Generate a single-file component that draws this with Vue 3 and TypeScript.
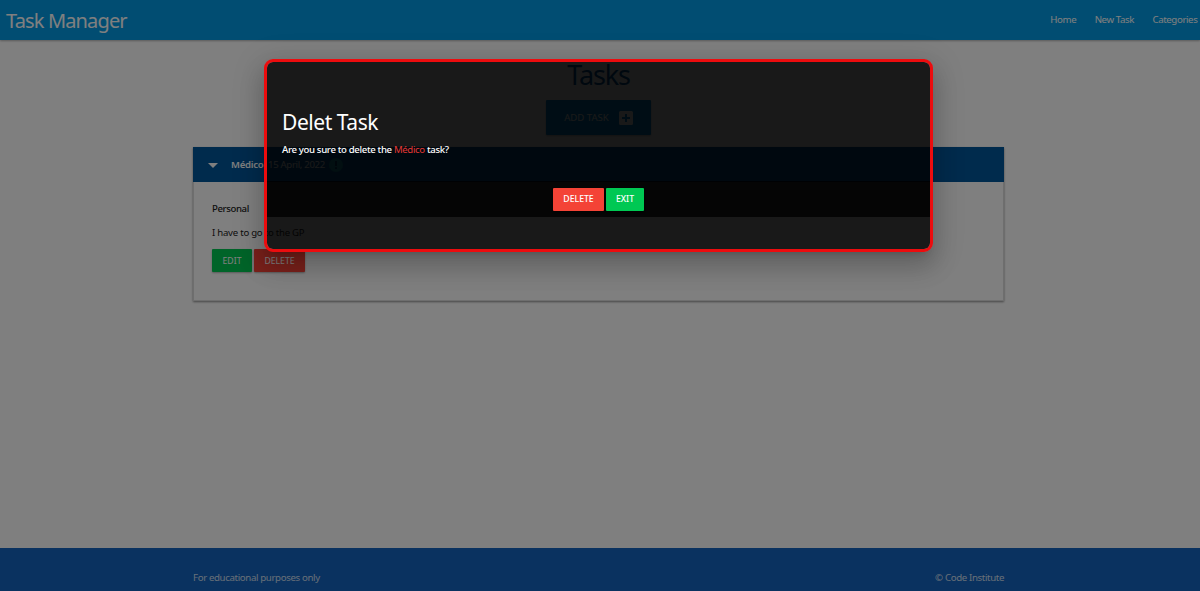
<script setup lang="ts">
interface Task {
  name: string
  date: string
  category: string
  description: string
}

const links: string[] = ['Home', 'New Task', 'Categories']
const task: Task = {
  name: 'Médico',
  date: '15 April, 2022',
  category: 'Personal',
  description: 'I have to go to the GP',
}
</script>

<template>
  <div class="page">
    <nav class="nav">
      <a class="brand">Task Manager</a>
      <div class="links">
        <a v-for="link in links" :key="link">{{ link }}</a>
      </div>
    </nav>
    <main class="container">
      <h3 class="title">Tasks</h3>
      <a class="add">
        <span>ADD TASK</span>
        <svg viewBox="0 0 14 14"><path fill-rule="evenodd" fill="currentColor" d="M1.5 0h11A1.5 1.5 0 0 1 14 1.5v11a1.5 1.5 0 0 1-1.5 1.5h-11A1.5 1.5 0 0 1 0 12.500V1.500A1.500 1.500 0 0 1 1.500 0zM6 3v3H3v2h3v3h2V8h3V6H8V3z" /></svg>
      </a>
      <section class="card">
        <header class="card-head">
          <svg class="caret" viewBox="0 0 10 5"><path d="M0 0h10L5 5z" fill="#fff" /></svg>
          <b>{{ task.name }}</b>
          <span class="date">{{ task.date }}</span>
          <svg class="alert" viewBox="0 0 14 14"><circle cx="7" cy="7" r="7" fill="#1597a8" /><path d="M6 3h2v5H6zM6 9.200h2V11H6z" fill="#01406f" /></svg>
        </header>
        <div class="card-body">
          <p class="category">{{ task.category }}</p>
          <p class="description">{{ task.description }}</p>
          <div class="actions">
            <a class="btn green edit">EDIT</a>
            <a class="btn red delete">DELETE</a>
          </div>
        </div>
      </section>
    </main>
    <footer class="footer">
      <div class="footer-inner">
        <span class="purpose">For educational purposes only</span>
        <span class="copyright">© Code Institute</span>
      </div>
    </footer>
    <div class="overlay"></div>
    <div class="modal">
      <div class="modal-content">
        <h4>Delet Task</h4>
        <p>Are you sure to delete the <em>{{ task.name }}</em> task?</p>
      </div>
      <div class="modal-footer">
        <a class="btn red delete">DELETE</a>
        <a class="btn green exit">EXIT</a>
      </div>
    </div>
  </div>
</template>

<style>
body {
  margin: 0;
  overflow: hidden;
}
</style>

<style scoped>
* {
  box-sizing: border-box;
}
.page {
  position: relative;
  height: 591px;
  overflow: hidden;
  display: flex;
  flex-direction: column;
  background: #fff;
  font-family: 'Noto Sans', 'Open Sans', sans-serif;
  font-size: 9.6px;
  letter-spacing: -0.24px;
  line-height: 14px;
  white-space: nowrap;
  color: #212121;
}
h3,
h4,
p {
  margin: 0;
  font-weight: 400;
}
.nav {
  flex: none;
  height: 40px;
  display: flex;
  align-items: center;
  justify-content: space-between;
  padding: 0 2.6px 0 6px;
  background: #039be5;
  color: #fff;
  box-shadow: 0 1px 2px rgba(0, 0, 0, 0.3);
}
.brand {
  font-size: 20px;
  line-height: 40px;
  letter-spacing: -0.85px;
  padding-top: 1px;
}
.links {
  display: flex;
  gap: 18.4px;
  font-size: 9.7px;
  letter-spacing: -0.4px;
}
.container {
  flex: 1;
  width: 811px;
  margin-left: 193px;
  display: flex;
  flex-direction: column;
  align-items: center;
}
.title {
  margin-top: 17px;
  height: 36px;
  font-size: 27px;
  line-height: 36px;
  letter-spacing: -1.2px;
  color: #01579b;
}
.add {
  margin-top: 7px;
  width: 105px;
  height: 35px;
  display: flex;
  align-items: center;
  justify-content: center;
  gap: 10px;
  border-radius: 1px;
  background: #0288d1;
  color: #fff;
  font-size: 9.6px;
  letter-spacing: 0;
  box-shadow: 0 1px 2px rgba(0, 0, 0, 0.3);
}
.add svg {
  width: 14px;
  height: 14px;
}
.card {
  margin-top: 12px;
  width: 811px;
  height: 154px;
  border: 1px solid #ddd;
  border-top: 0;
  box-shadow: 0 1px 2px rgba(0, 0, 0, 0.45);
}
.card-head {
  height: 35px;
  margin: 0 -1px;
  display: flex;
  align-items: center;
  padding: 1px 0 0 14.5px;
  background: #01579b;
  color: #fff;
}
.caret {
  width: 10px;
  height: 5px;
  margin-right: 13.500px;
}
.card-head b {
  width: 34px;
  font-weight: 600;
}
.date {
  width: 59px;
  margin-left: 3px;
  letter-spacing: -0.32px;
}
.alert {
  width: 14px;
  height: 14px;
  margin-left: 2px;
}
.card-body {
  padding: 20px 18px;
}
.category {
  font-weight: 500;
  letter-spacing: -0.4px;
}
.description {
  margin-top: 10px;
}
.actions {
  margin-top: 9px;
  display: flex;
  gap: 2px;
}
.btn {
  height: 23px;
  display: flex;
  align-items: center;
  justify-content: center;
  border-radius: 1px;
  color: #fff;
  font-size: 8.7px;
  letter-spacing: 0;
  box-shadow: 0 1px 2px rgba(0, 0, 0, 0.3);
}
.green {
  background: #00c853;
}
.red {
  background: #f44336;
}
.edit {
  width: 40px;
}
.delete {
  width: 51px;
}
.exit {
  width: 38px;
}
.footer {
  flex: none;
  height: 43px;
  background: #1565c0;
  color: #fff;
}
.footer-inner {
  width: 811px;
  margin-left: 193px;
  padding-top: 23px;
  display: flex;
  justify-content: space-between;
  font-size: 9.7px;
  letter-spacing: -0.37px;
  color: rgba(255, 255, 255, 0.8);
}
.overlay {
  position: absolute;
  inset: 0;
  background: rgba(0, 0, 0, 0.5);
}
.modal {
  position: absolute;
  top: 59px;
  left: 264px;
  width: 669px;
  height: 192.500px;
  border: 3px solid #ec0c0e;
  border-radius: 9px;
  background: rgba(0, 0, 0, 0.8);
  background-clip: padding-box;
  color: #fff;
  box-shadow: 0 15px 24px 2px rgba(0, 0, 0, 0.14), 0 6px 30px 5px rgba(0, 0, 0, 0.12), 0 7px 10px -7px rgba(0, 0, 0, 0.2);
}
.modal-content {
  height: 119px;
  padding: 44px 15px 0;
}
.modal h4 {
  font-size: 21px;
  line-height: 32px;
  letter-spacing: -0.45px;
}
.modal p {
  margin-top: 5px;
  font-weight: 500;
  letter-spacing: -0.34px;
}
.modal em {
  color: #e53935;
  font-style: normal;
  font-weight: 400;
}
.modal-footer {
  height: 36px;
  display: flex;
  align-items: center;
  justify-content: center;
  gap: 2px;
  background: rgba(0, 0, 0, 0.8);
}
.modal .btn {
  font-weight: 500;
}
</style>
